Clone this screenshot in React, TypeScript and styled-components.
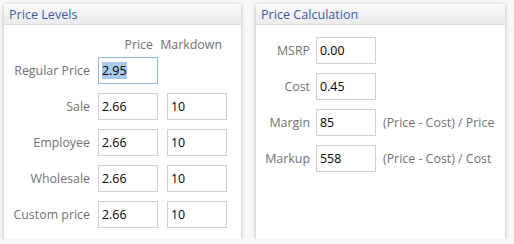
import React from "react";
import styled, { createGlobalStyle } from "styled-components";

const Global = createGlobalStyle`
  html, body { margin: 0; padding: 0; background: #f7f7f7; }
  body { font-family: Tahoma, "Open Sans", "DejaVu Sans", sans-serif; font-size: 12.4px; }
`;

const Page = styled.div`
  display: flex;
  gap: 15px;
  padding: 4px 0 0 4px;
`;

const Panel = styled.section<{ $w: number }>`
  width: ${(p) => p.$w}px;
  height: 235px;
  background: #fff;
  box-shadow: 0 1px 4px rgba(0, 0, 0, 0.28);
  display: flex;
  flex-direction: column;
`;

const Header = styled.div`
  height: 21px;
  box-sizing: border-box;
  padding-left: 5px;
  display: flex;
  align-items: center;
  background: linear-gradient(#fbfbfb, #ebebeb);
  border-bottom: 1px solid #dcdcdc;
  color: #3b5ba5;
  font-size: 12.6px;
`;

const Body = styled.div<{ $top: number }>`
  padding-top: ${(p) => p.$top}px;
  display: flex;
  flex-direction: column;
`;

const Grid = styled.div<{ $cols: string; $gap: number }>`
  display: grid;
  grid-template-columns: ${(p) => p.$cols};
  column-gap: ${(p) => p.$gap}px;
  grid-auto-rows: 27px;
  row-gap: 9px;
  align-items: center;
`;

const HeadRow = styled.div`
  display: grid;
  grid-template-columns: 86px 60px 61px;
  column-gap: 8px;
  height: 16px;
  margin-bottom: 5px;
  align-items: center;
  color: #727272;
`;

const ColHead = styled.span`
  display: flex;
  justify-content: flex-end;
  padding-right: 5px;
  white-space: nowrap;
`;

const Label = styled.span`
  text-align: right;
  color: #727272;
  white-space: nowrap;
`;

const Field = styled.input<{ $shift?: number }>`
  box-sizing: border-box;
  width: 60px;
  height: 27px;
  margin-left: ${(p) => p.$shift ?? 0}px;
  border: 1px solid #d0d0d0;
  padding: 0 0 0 3px;
  font: inherit;
  color: #000;
  outline: none;
  background: #fff;
`;

const Focused = styled.div`
  box-sizing: border-box;
  width: 60px;
  height: 27px;
  border: 1px solid #8db9e4;
  padding-left: 3px;
  display: flex;
  align-items: center;
  color: #000;
`;

const Sel = styled.span`
  background: #a6cbef;
`;

const Formula = styled.span`
  color: #727272;
  white-space: nowrap;
  padding-left: 1px;
`;

const levels = [
  ["Sale", "2.66", "10"],
  ["Employee", "2.66", "10"],
  ["Wholesale", "2.66", "10"],
  ["Custom price", "2.66", "10"],
];

const calc: [string, string, string][] = [
  ["MSRP", "0.00", ""],
  ["Cost", "0.45", ""],
  ["Margin", "85", "(Price - Cost) / Price"],
  ["Markup", "558", "(Price - Cost) / Cost"],
];

export default function App() {
  return (
    <>
      <Global />
      <Page>
        <Panel $w={237}>
          <Header>Price Levels</Header>
          <Body $top={11}>
            <HeadRow>
              <span />
              <ColHead>Price</ColHead>
              <ColHead>Markdown</ColHead>
            </HeadRow>
            <Grid $cols="86px 60px 61px" $gap={8}>
              <Label>Regular Price</Label>
              <Focused>
                <Sel>2.95</Sel>
              </Focused>
              <span />
              {levels.map(([l, p, m]) => (
                <React.Fragment key={l}>
                  <Label>{l}</Label>
                  <Field defaultValue={p} />
                  <Field defaultValue={m} $shift={1} />
                </React.Fragment>
              ))}
            </Grid>
          </Body>
        </Panel>
        <Panel $w={249}>
          <Header>Price Calculation</Header>
          <Body $top={12}>
            <Grid $cols="54px 60px auto" $gap={6}>
              {calc.map(([l, v, f]) => (
                <React.Fragment key={l}>
                  <Label>{l}</Label>
                  <Field defaultValue={v} />
                  <Formula>{f}</Formula>
                </React.Fragment>
              ))}
            </Grid>
          </Body>
        </Panel>
      </Page>
    </>
  );
}
